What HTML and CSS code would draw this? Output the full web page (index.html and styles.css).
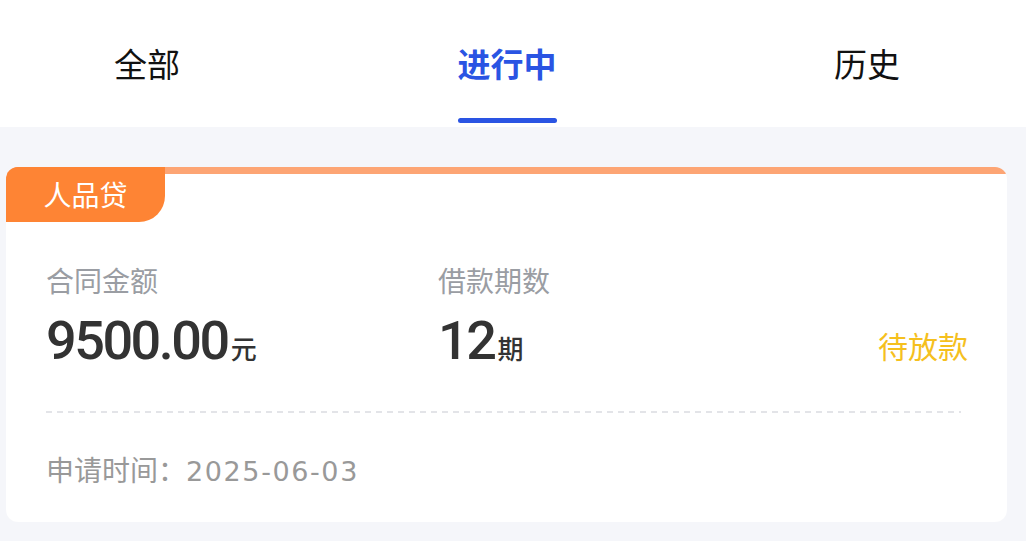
FILE: index.html
```html
<!DOCTYPE html>
<html>
<head>
<meta name="viewport" content="width=device-width, initial-scale=1.0"/>
<link rel="stylesheet" href="styles.css">
</head>
<body>
<div class="tabs">
    <div class="tab">全部</div>
    <div class="tab active">进行中</div>
    <div class="tab">历史</div>
</div>
<div class="list">
    <div class="card">
        <div class="tag">人品贷</div>
        <div class="info">
            <div class="col col1">
                <div class="label">合同金额</div>
                <div class="value">9500.00<span class="unit">元</span></div>
            </div>
            <div class="col col2">
                <div class="label">借款期数</div>
                <div class="value">12<span class="unit">期</span></div>
            </div>
            <div class="status">待放款</div>
        </div>
        <div class="dash"></div>
        <div class="date">申请时间：<span class="num">2025-06-03</span></div>
    </div>
</div>
</body>
</html>
```

FILE: styles.css
```css
body {
    margin: 0;
    background: #f5f6fa;
    font-family: "Noto Sans CJK SC", "Noto Sans", sans-serif;
    height: 541px;
    overflow: hidden;
}

.tabs {
    height: 127px;
    background: #fff;
    display: flex;
    justify-content: space-between;
    padding: 0 126px 0 114px;
}

.tab {
    position: relative;
    font-size: 33px;
    line-height: 127px;
    color: #111;
}

.tab.active {
    color: #2a54e3;
    font-weight: bold;
}

.tab.active::after {
    content: "";
    position: absolute;
    left: 0;
    right: 0;
    bottom: 4px;
    height: 5px;
    border-radius: 3px;
    background: #2a54e3;
}

.list {
    padding: 40px 19px 0 6px;
}

.card {
    background: linear-gradient(#fda574, #fda574) top / 100% 7px no-repeat, #fff;
    border-radius: 12px;
    overflow: hidden;
    height: 355px;
}

.tag {
    width: 159px;
    height: 55px;
    line-height: 55px;
    text-align: center;
    background: #fe8434;
    color: #fff;
    font-size: 28px;
    border-radius: 0 0 26px 0;
}

.info {
    display: flex;
    align-items: flex-end;
    padding: 38px 39px 0 40px;
}

.col1 {
    width: 392px;
}

.col2 {
    flex: 1;
}

.label {
    font-size: 28px;
    line-height: 40px;
    color: #9a9da3;
}

.value {
    margin-top: 8px;
    font-family: "Roboto", sans-serif;
    font-weight: 500;
    font-size: 54px;
    letter-spacing: -2.5px;
    line-height: 66px;
    color: #333;
}

.unit {
    font-family: "Noto Sans CJK SC", sans-serif;
    font-size: 26px;
    letter-spacing: 0;
    font-weight: 500;
    margin-left: 3px;
}

.status {
    font-size: 30px;
    color: #f5c01e;
    line-height: 40px;
    margin-bottom: 16px;
}

.dash {
    margin: 30px 46px 0 40px;
    height: 2px;
    background: repeating-linear-gradient(90deg, #e3e4e8 0 6px, transparent 6px 11px);
}

.date {
    padding: 36px 40px 0;
    font-size: 28px;
    line-height: 40px;
    color: #999;
}

.date .num {
    font-family: "DejaVu Sans", sans-serif;
    font-size: 27px;
    letter-spacing: 1.6px;
}
```
